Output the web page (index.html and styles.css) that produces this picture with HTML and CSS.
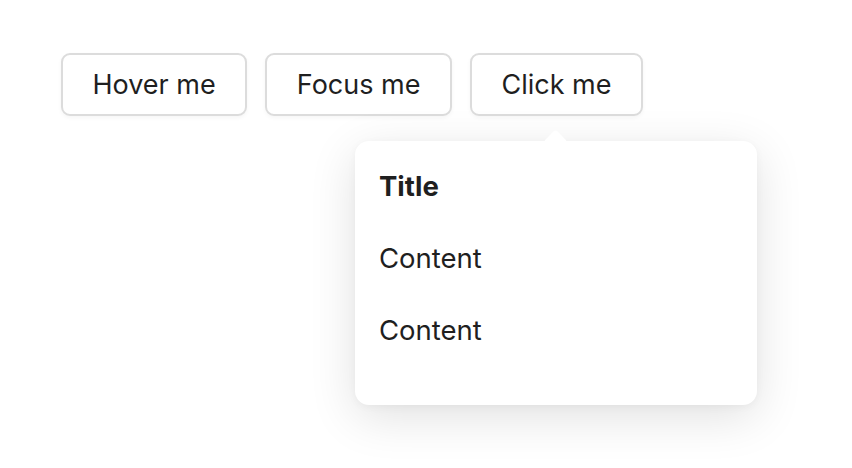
FILE: index.html
```html
<!DOCTYPE html>
<html>
<head>
<meta charset="utf-8">
<link rel="stylesheet" href="styles.css">
</head>
<body>
<div class="page">
  <div class="row">
    <button class="btn">Hover me</button>
    <button class="btn">Focus me</button>
    <button class="btn">Click me</button>
  </div>
  <div class="panel">
    <div class="tip"></div>
    <div class="item title">Title</div>
    <div class="item">Content</div>
    <div class="item">Content</div>
  </div>
</div>
</body>
</html>
```
FILE: styles.css
```css
html, body {
  margin: 0;
  padding: 0;
  background: #ffffff;
}
body {
  min-height: 468px;
  font-family: Inter, "Noto Sans", sans-serif;
  color: #1f1f1f;
}
.page {
  padding: 53px 0 64px 61px;
  display: flex;
  flex-direction: column;
  align-items: flex-start;
}
.row {
  display: flex;
  gap: 18px;
  align-items: flex-start;
}
.btn {
  display: block;
  font-family: inherit;
  font-size: 27px;
  color: #1f1f1f;
  height: 63px;
  padding: 0 29.5px;
  background: #fff;
  border: 2px solid #dcdcdc;
  border-radius: 9px;
  box-shadow: 0 2px 4px rgba(0,0,0,0.04);
  cursor: pointer;
}
.panel {
  position: relative;
  margin: 25px 0 0 294px;
  width: 402px;
  height: 264px;
  box-sizing: border-box;
  padding: 9px 24px;
  background: #fff;
  border-radius: 14px;
  box-shadow: 0 12px 48px rgba(0,0,0,0.12), 0 2px 8px rgba(0,0,0,0.04);
}
.tip {
  position: absolute;
  top: -8px;
  left: 192px;
  width: 17px;
  height: 17px;
  background: #fff;
  border-radius: 3px;
  transform: rotate(45deg);
}
.item {
  height: 72px;
  display: flex;
  align-items: center;
  font-size: 27.5px;
}
.title {
  font-weight: 700;
}
```
